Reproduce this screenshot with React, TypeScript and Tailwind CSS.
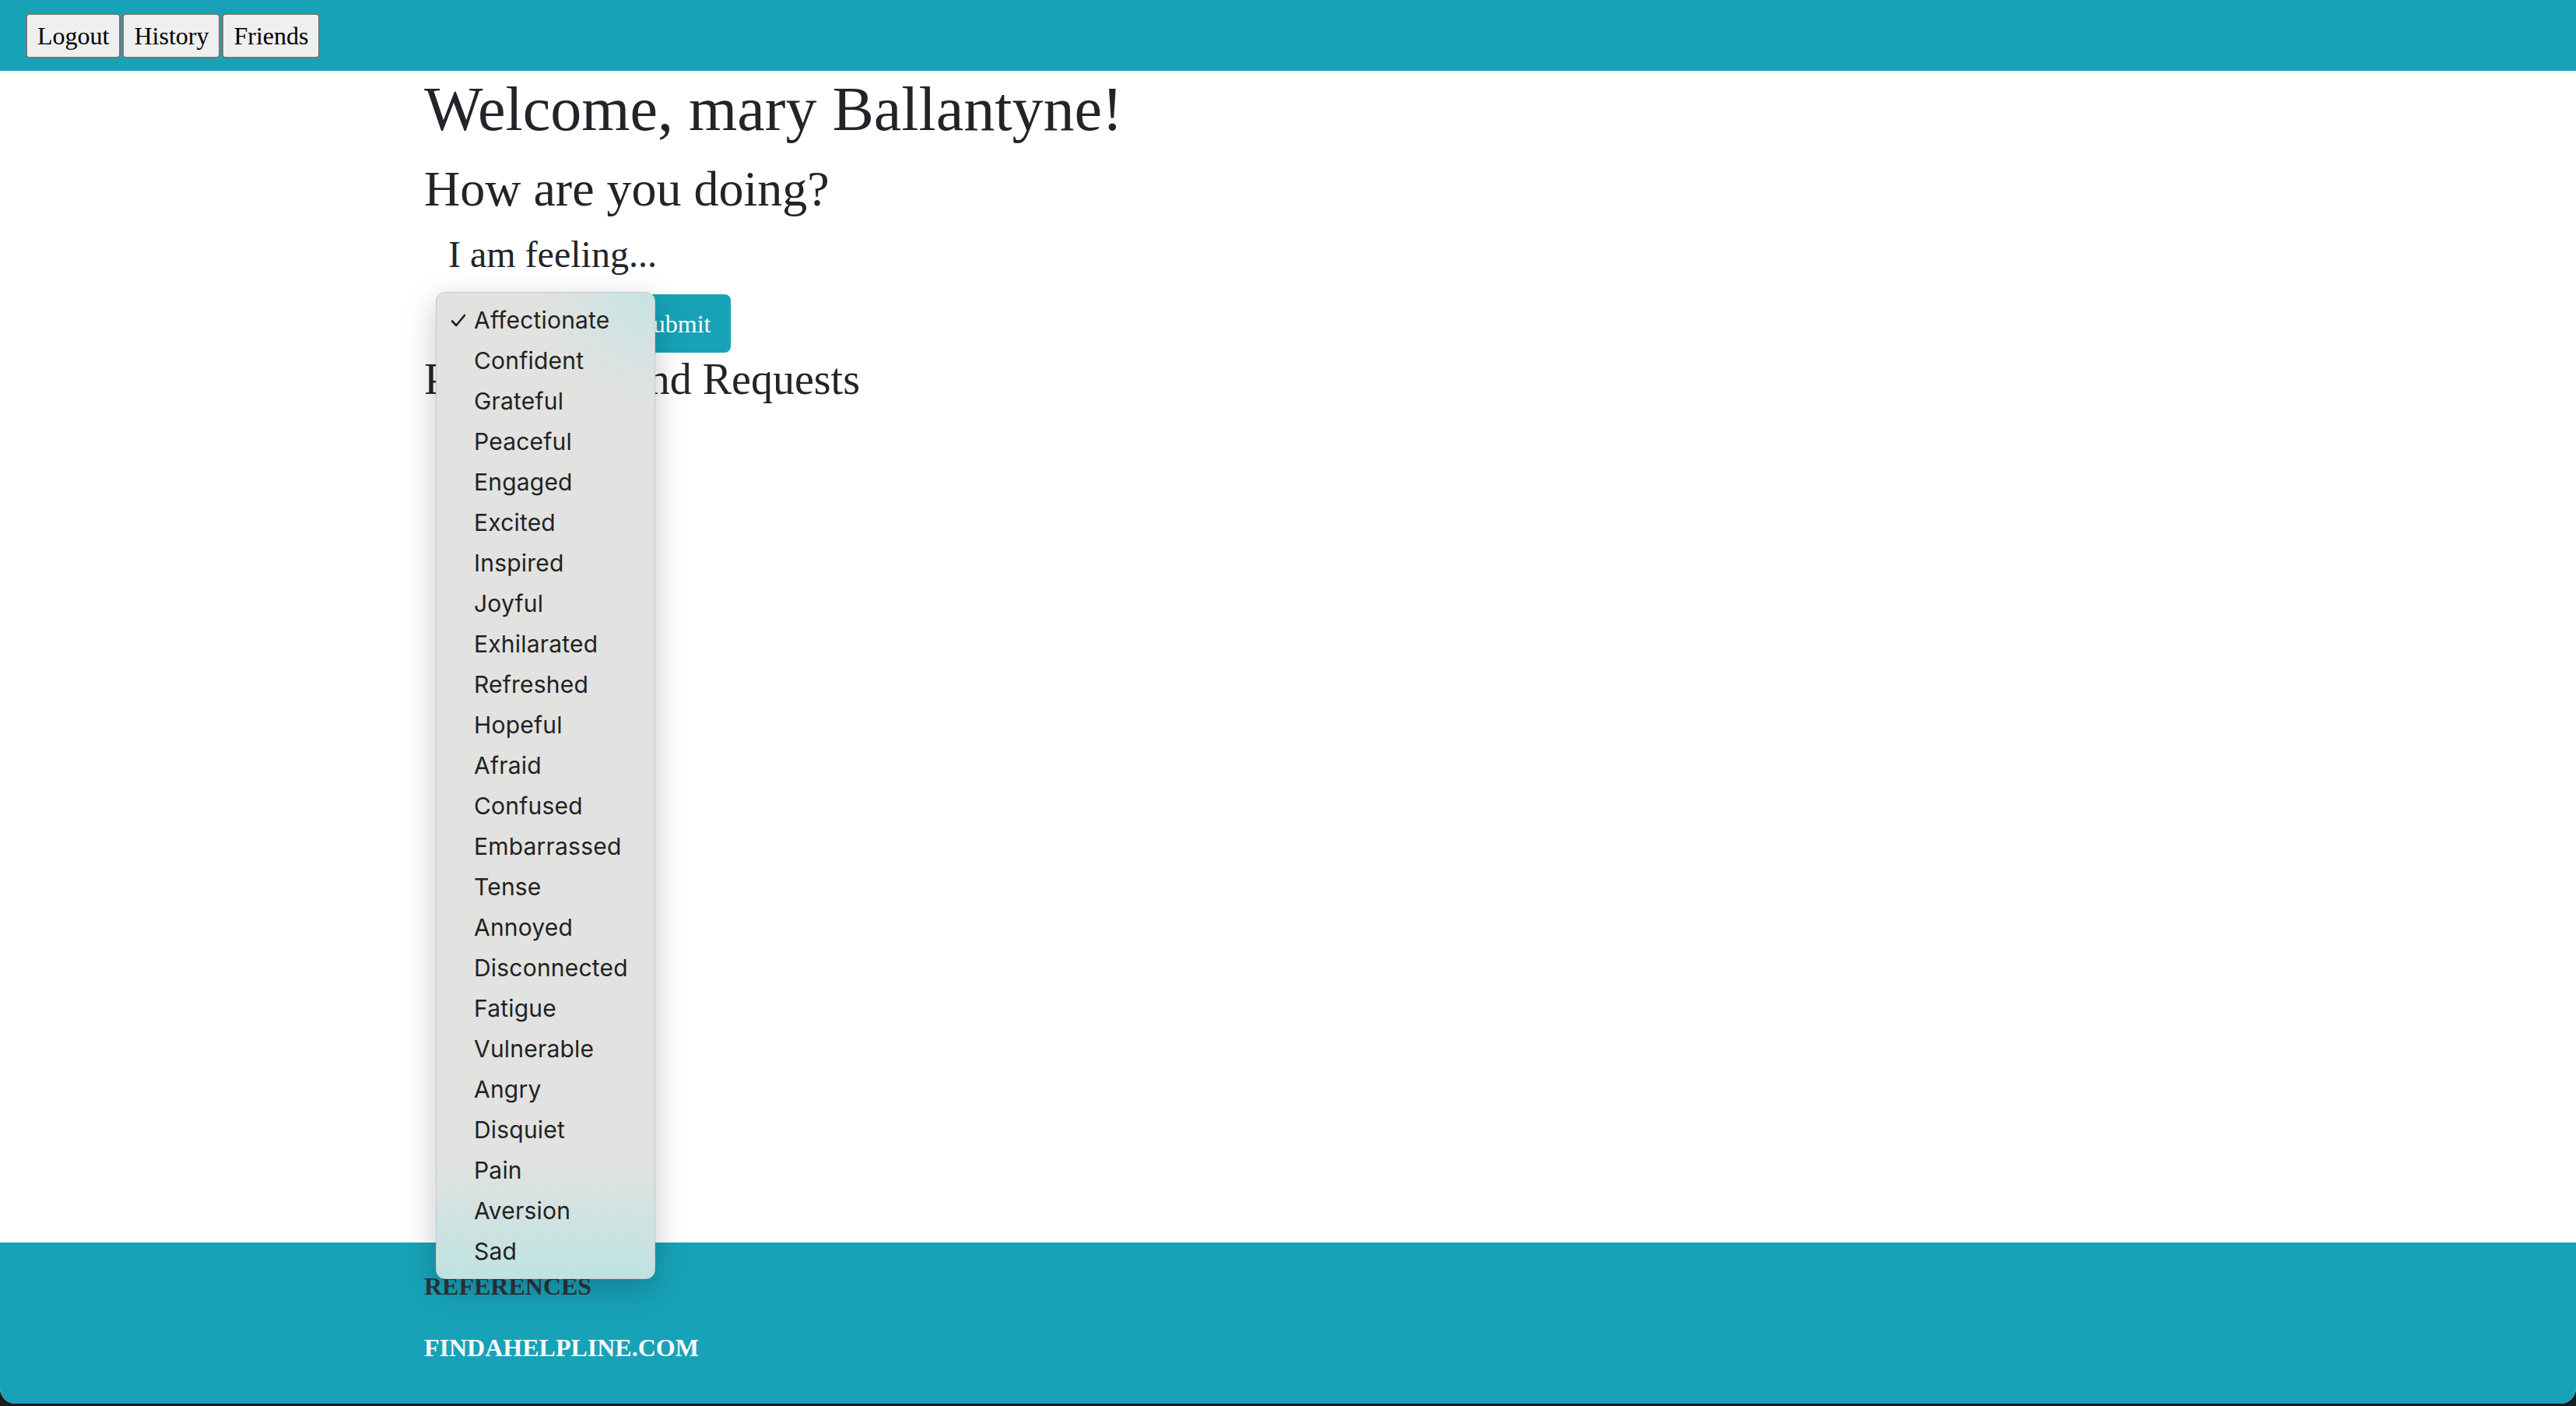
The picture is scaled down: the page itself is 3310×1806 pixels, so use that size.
import React from 'react';

const moods = [
  'Affectionate',
  'Confident',
  'Grateful',
  'Peaceful',
  'Engaged',
  'Excited',
  'Inspired',
  'Joyful',
  'Exhilarated',
  'Refreshed',
  'Hopeful',
  'Afraid',
  'Confused',
  'Embarrassed',
  'Tense',
  'Annoyed',
  'Disconnected',
  'Fatigue',
  'Vulnerable',
  'Angry',
  'Disquiet',
  'Pain',
  'Aversion',
  'Sad',
];

function NavButton({ label }: { label: string }) {
  return (
    <button
      type="button"
      className="h-[58px] rounded-[5px] border-2 border-[#767676] bg-[#efefef] px-[13px] text-[32px] leading-none text-black"
    >
      {label}
    </button>
  );
}

function MoodMenu({ selected }: { selected: string }) {
  return (
    <div className="absolute top-[-3px] left-[15px] z-10 w-[282px] rounded-[12px] border border-[#c9c9c9] bg-[radial-gradient(circle_at_100%_0%,rgba(196,228,226,0.95),rgba(226,226,225,0)_150px),linear-gradient(to_bottom,#e2e2e1_0%,#e2e2e1_88%,#bee3e2_100%)] py-[9px] font-['Inter',sans-serif] shadow-[0_12px_40px_rgba(0,0,0,0.22)]">
      {moods.map((m) => (
        <div
          key={m}
          className="flex h-[52px] items-center text-[30px] leading-[52px] tracking-[0.2px] text-[#222]"
        >
          <span className="flex w-[48px] justify-end pr-[10px]">
            {m === selected && (
              <svg width="20" height="17" viewBox="0 0 20 17" fill="none">
                <path
                  d="M2 9.5 L7.2 15 L18 2"
                  stroke="#222"
                  strokeWidth="2.6"
                  strokeLinecap="round"
                  strokeLinejoin="round"
                />
              </svg>
            )}
          </span>
          <span>{m}</span>
        </div>
      ))}
    </div>
  );
}

export default function App() {
  return (
    <div className="h-[1806px] w-[3310px] overflow-hidden bg-[#1c1c1c] font-['Liberation_Serif',serif]">
      <div className="flex h-[1803px] flex-col overflow-hidden rounded-b-[20px] bg-white">
        {/* barra superior */}
        <nav className="flex h-[91px] shrink-0 items-center gap-[2px] bg-[#17a2b8] pl-[33px]">
          <NavButton label="Logout" />
          <NavButton label="History" />
          <NavButton label="Friends" />
        </nav>

        <main className="flex-1">
          <div className="mx-auto w-[2280px] px-[30px] text-[#212529]">
            <h1 className="mt-px mb-[17px] text-[80px] leading-[96px] font-normal">
              Welcome, mary Ballantyne!
            </h1>
            <h2 className="mb-[16px] text-[64px] leading-[76.8px] font-normal">
              How are you doing?
            </h2>
            <label className="block pl-[31px] text-[48px] leading-[57.6px]">
              I am feeling...
            </label>

            <div className="relative mt-[23px] flex items-center">
              <div className="ml-[15px] h-[75px] w-[235px] rounded-[8px] border-2 border-[#ced4da] bg-white" />
              <button
                type="button"
                className="h-[75px] rounded-[8px] border-2 border-[#17a2b8] bg-[#17a2b8] px-[24px] text-[32px] leading-[48px] text-white"
              >
                Submit
              </button>
              <MoodMenu selected="Affectionate" />
            </div>

            <h3 className="mt-px text-[56px] leading-[67.2px] font-normal">
              Pending Friend Requests
            </h3>
          </div>
        </main>

        <footer className="h-[207px] shrink-0 bg-[#17a2b8] pt-[37px]">
          <div className="mx-auto w-[2280px] px-[30px]">
            <p className="text-[32px] leading-[38.4px] font-bold text-[#2e343a]">
              REFERENCES
            </p>
            <p className="mt-[41px] text-[32px] leading-[38.4px] font-bold text-[#f8f9fa]">
              FINDAHELPLINE.COM
            </p>
          </div>
        </footer>
      </div>
    </div>
  );
}
